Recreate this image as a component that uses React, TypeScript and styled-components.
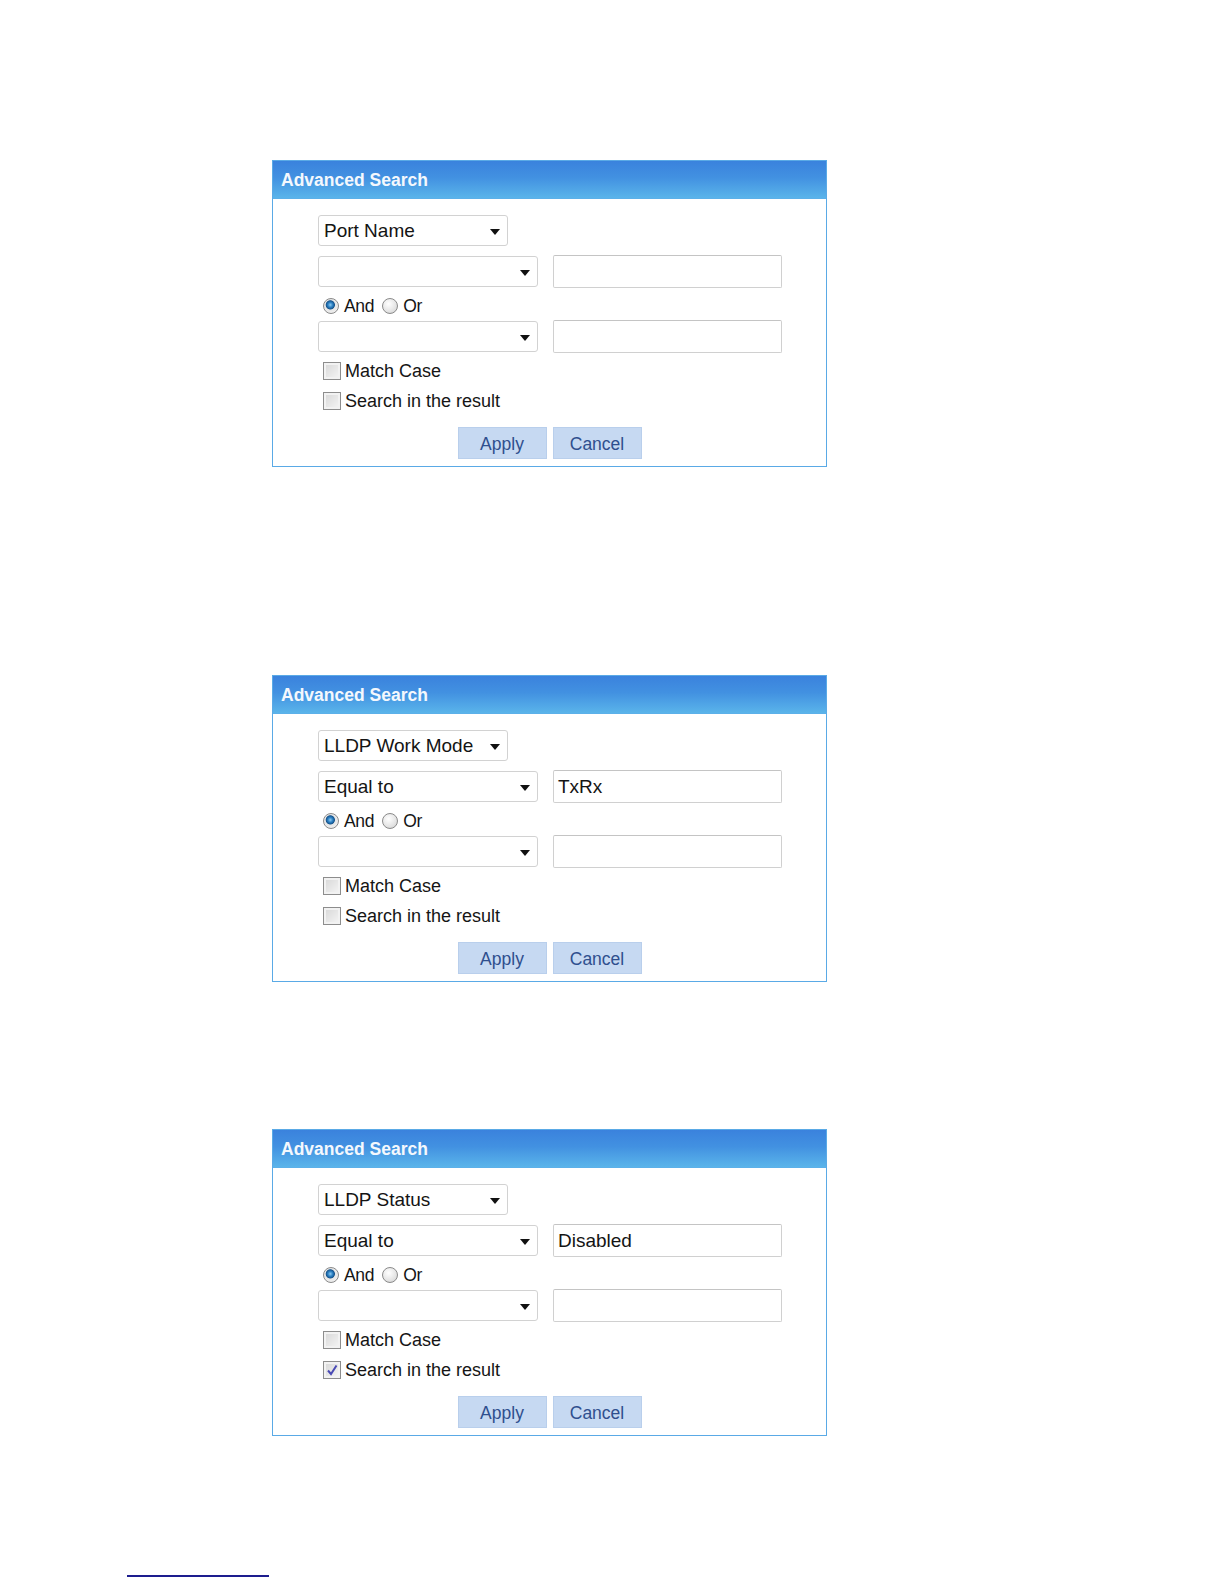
import styled, { createGlobalStyle } from "styled-components";

const GlobalStyle = createGlobalStyle`
    html, body {
        margin: 0;
        padding: 0;
        background: #ffffff;
    }
    body {
        font-family: "Liberation Sans", Arial, sans-serif;
        color: #151515;
    }
`;

const StyledPage = styled.div`
    display: flex;
    flex-direction: column;
    align-items: flex-start;
    padding-top: 160px;
`;

const StyledDialog = styled.div<{ $top: number }>`
    box-sizing: border-box;
    width: 555px;
    margin-left: 272px;
    margin-top: ${(p) => p.$top}px;
    border: 1px solid #5aaae6;
    background: #ffffff;
`;

const StyledHeader = styled.div`
    height: 38px;
    box-sizing: border-box;
    display: flex;
    align-items: center;
    padding: 2px 0 0 8px;
    border-bottom: 1px solid #5cb0e9;
    background: linear-gradient(#3a82dd 0%, #4291e1 45%, #5ab4ea 100%);
    color: #f4f8fd;
    font-size: 17.5px;
    font-weight: bold;
`;

const StyledBody = styled.div`
    display: flex;
    flex-direction: column;
    padding: 16px 0 7px 45px;
`;

const StyledFieldRow = styled.div<{ $gap?: number }>`
    display: flex;
    align-items: center;
    gap: 15px;
    height: ${(p) => (p.$gap !== undefined ? 33 : 31)}px;
    margin-top: ${(p) => p.$gap ?? 0}px;
`;

const StyledSelect = styled.div<{ $width: number }>`
    box-sizing: border-box;
    width: ${(p) => p.$width}px;
    height: 31px;
    display: flex;
    align-items: center;
    padding: 0 7px 0 5px;
    border: 1px solid #d2d2d2;
    border-radius: 3px;
    background: #ffffff;
    font-size: 19px;
    color: #141414;
    white-space: nowrap;
`;

const StyledCaret = styled.span`
    width: 0;
    height: 0;
    margin-left: auto;
    margin-top: 2px;
    border-left: 5px solid transparent;
    border-right: 5px solid transparent;
    border-top: 6px solid #111111;
`;

const StyledTextBox = styled.div`
    box-sizing: border-box;
    width: 229px;
    height: 33px;
    display: flex;
    align-items: center;
    padding-left: 4px;
    border: 1px solid #d0d0d0;
    border-top-color: #c4c4c4;
    border-radius: 2px;
    font-size: 19px;
    color: #141414;
`;

const StyledRadioRow = styled.div`
    box-sizing: border-box;
    display: flex;
    align-items: center;
    height: 32px;
    padding: 4px 0 0 5px;
    font-size: 17.5px;
`;

const StyledRadio = styled.span<{ $checked?: boolean }>`
    box-sizing: border-box;
    width: 16px;
    height: 16px;
    border-radius: 50%;
    border: 1px solid #8a8a8a;
    background: ${(p) =>
        p.$checked
            ? "radial-gradient(circle at 45% 42%, #8fcaf0 0, #2a7fc2 2.5px, #17548c 4.2px, #e6e6e6 5px, #f7f7f7 100%)"
            : "radial-gradient(circle at 40% 35%, #ffffff 0, #e4e4e4 60%, #cccccc 100%)"};
    margin-right: 5px;
`;

const StyledOption = styled.span`
    margin-right: 8px;
    letter-spacing: -0.3px;
`;

const StyledCheckRow = styled.div<{ $first?: boolean }>`
    display: flex;
    align-items: center;
    height: 30px;
    margin-top: ${(p) => (p.$first ? 3 : 0)}px;
    padding-left: 5px;
    font-size: 18px;
`;

const StyledCheck = styled.span`
    box-sizing: border-box;
    width: 18px;
    height: 18px;
    display: flex;
    align-items: center;
    justify-content: center;
    border: 1px solid #8d8d8d;
    box-shadow: inset 0 0 0 2px #f2f2f2;
    background: linear-gradient(135deg, #d6d6d6, #f6f6f6);
    margin-right: 4px;
`;

const StyledButtonBar = styled.div`
    display: flex;
    justify-content: center;
    gap: 6px;
    margin-top: 11px;
    margin-left: -45px;
`;

const StyledButton = styled.button`
    box-sizing: border-box;
    width: 89px;
    height: 32px;
    padding: 2px 0 0;
    border: 1px solid #b9cfec;
    background: #c6d9f2;
    color: #2f4f8e;
    font-family: "Liberation Sans", Arial, sans-serif;
    font-size: 17.5px;
`;

const StyledFootRule = styled.div`
    width: 142px;
    height: 2px;
    margin: 139px 0 0 127px;
    background: #1d1d8e;
`;

type SearchDialog = {
    top: number;
    field: string;
    operator: string;
    value: string;
    inResult: boolean;
};

const dialogs: SearchDialog[] = [
    { top: 0, field: "Port Name", operator: "", value: "", inResult: false },
    { top: 208, field: "LLDP Work Mode", operator: "Equal to", value: "TxRx", inResult: false },
    { top: 147, field: "LLDP Status", operator: "Equal to", value: "Disabled", inResult: true },
];

const Tick = () => (
    <svg width="14" height="14" viewBox="0 0 14 14">
        <path d="M3 7.5 L6 11 L11.5 2.5" fill="none" stroke="#4a4ab4" strokeWidth="2" />
    </svg>
);

const AdvancedSearch = ({ d }: { d: SearchDialog }) => (
    <StyledDialog $top={d.top}>
        <StyledHeader>Advanced Search</StyledHeader>
        <StyledBody>
            <StyledFieldRow>
                <StyledSelect $width={190}>
                    {d.field}
                    <StyledCaret />
                </StyledSelect>
            </StyledFieldRow>
            <StyledFieldRow $gap={9}>
                <StyledSelect $width={220}>
                    {d.operator}
                    <StyledCaret />
                </StyledSelect>
                <StyledTextBox>{d.value}</StyledTextBox>
            </StyledFieldRow>
            <StyledRadioRow>
                <StyledRadio $checked />
                <StyledOption>And</StyledOption>
                <StyledRadio />
                <StyledOption>Or</StyledOption>
            </StyledRadioRow>
            <StyledFieldRow $gap={0}>
                <StyledSelect $width={220}>
                    <StyledCaret />
                </StyledSelect>
                <StyledTextBox />
            </StyledFieldRow>
            <StyledCheckRow $first>
                <StyledCheck />
                Match Case
            </StyledCheckRow>
            <StyledCheckRow>
                <StyledCheck>{d.inResult ? <Tick /> : null}</StyledCheck>
                Search in the result
            </StyledCheckRow>
            <StyledButtonBar>
                <StyledButton>Apply</StyledButton>
                <StyledButton>Cancel</StyledButton>
            </StyledButtonBar>
        </StyledBody>
    </StyledDialog>
);

export default function App() {
    return (
        <>
            <GlobalStyle />
            <StyledPage>
                {dialogs.map((d) => (
                    <AdvancedSearch key={d.field} d={d} />
                ))}
                <StyledFootRule />
            </StyledPage>
        </>
    );
}
